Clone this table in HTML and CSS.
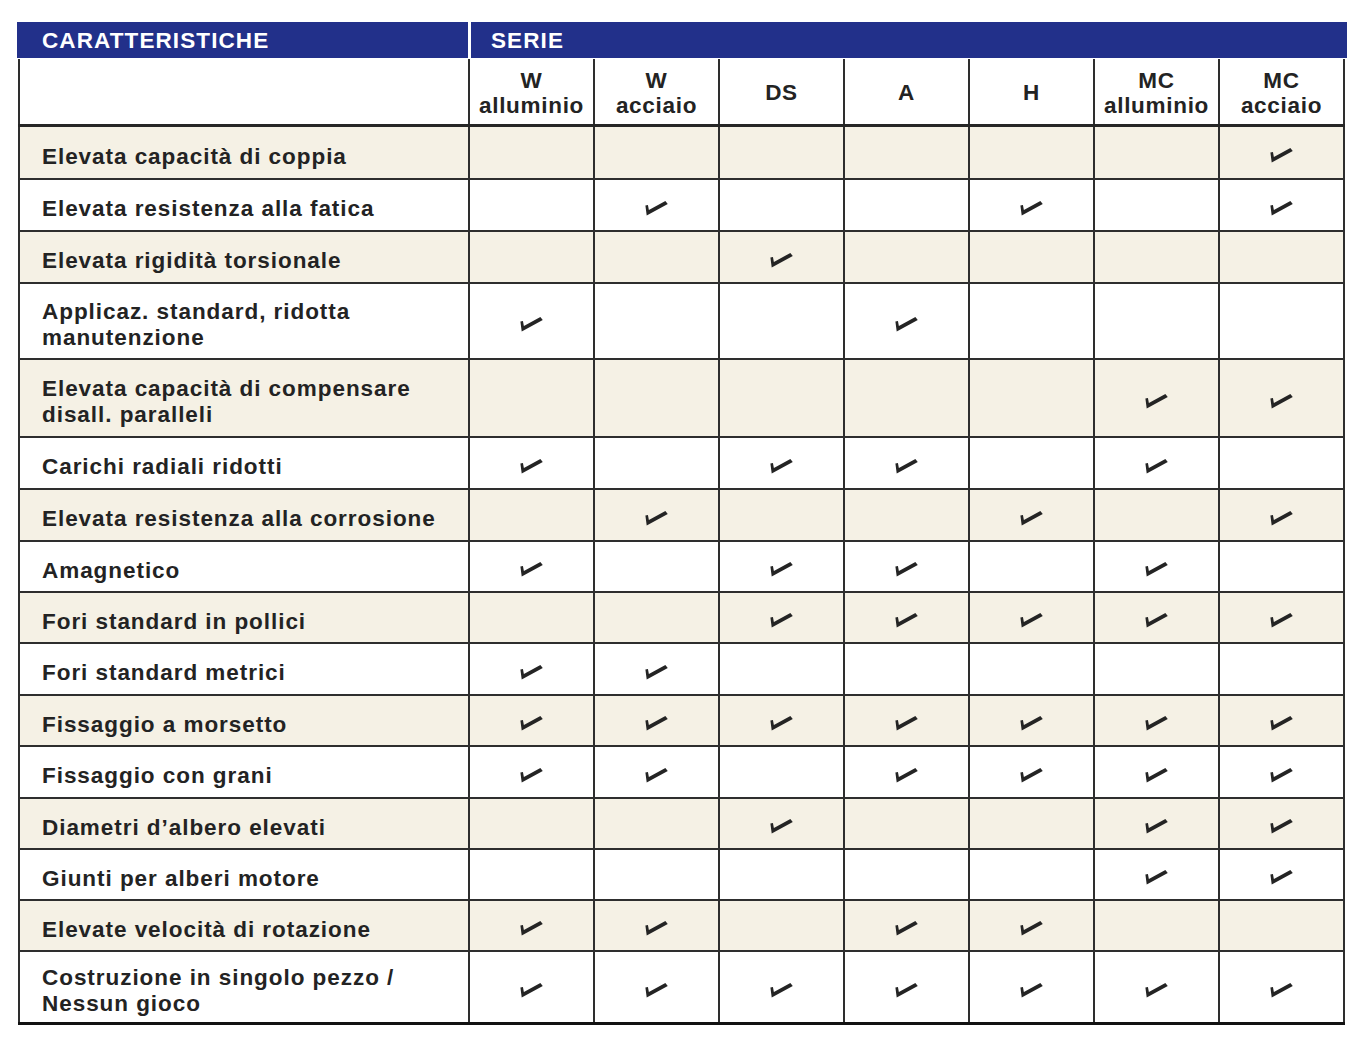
FILE: index.html
```html
<!DOCTYPE html>
<html lang="it">
<head>
<meta charset="utf-8">
<title>Caratteristiche serie</title>
<link rel="stylesheet" href="styles.css">
</head>
<body>
<svg class="defs" width="0" height="0" aria-hidden="true">
  <symbol id="chk" viewBox="0 0 26 17">
    <path d="M1.2 5.8 L3.9 5.2 L4.9 10.6 L22.4 1 L25 4.3 L2.6 16.4 Z"/>
  </symbol>
</svg>
<div class="page">
  <div class="topbar">
    <div class="bar-cell">CARATTERISTICHE</div>
    <div class="bar-cell serie">SERIE</div>
  </div>
  <div class="table">
    <div class="row head">
      <div class="cell first"></div>
      <div class="cell hc">W<br>alluminio</div>
      <div class="cell hc">W<br>acciaio</div>
      <div class="cell hc">DS</div>
      <div class="cell hc">A</div>
      <div class="cell hc">H</div>
      <div class="cell hc">MC<br>alluminio</div>
      <div class="cell hc">MC<br>acciaio</div>
    </div>
    <div class="row shade">
      <div class="cell first">Elevata capacità di coppia</div>
      <div class="cell"></div><div class="cell"></div><div class="cell"></div><div class="cell"></div><div class="cell"></div><div class="cell"></div>
      <div class="cell"><svg class="ck"><use href="#chk"/></svg></div>
    </div>
    <div class="row">
      <div class="cell first">Elevata resistenza alla fatica</div>
      <div class="cell"></div>
      <div class="cell"><svg class="ck"><use href="#chk"/></svg></div>
      <div class="cell"></div><div class="cell"></div>
      <div class="cell"><svg class="ck"><use href="#chk"/></svg></div>
      <div class="cell"></div>
      <div class="cell"><svg class="ck"><use href="#chk"/></svg></div>
    </div>
    <div class="row shade">
      <div class="cell first">Elevata rigidità torsionale</div>
      <div class="cell"></div><div class="cell"></div>
      <div class="cell"><svg class="ck"><use href="#chk"/></svg></div>
      <div class="cell"></div><div class="cell"></div><div class="cell"></div><div class="cell"></div>
    </div>
    <div class="row">
      <div class="cell first">Applicaz. standard, ridotta<br>manutenzione</div>
      <div class="cell"><svg class="ck"><use href="#chk"/></svg></div>
      <div class="cell"></div><div class="cell"></div>
      <div class="cell"><svg class="ck"><use href="#chk"/></svg></div>
      <div class="cell"></div><div class="cell"></div><div class="cell"></div>
    </div>
    <div class="row shade">
      <div class="cell first">Elevata capacità di compensare<br>disall. paralleli</div>
      <div class="cell"></div><div class="cell"></div><div class="cell"></div><div class="cell"></div><div class="cell"></div>
      <div class="cell"><svg class="ck"><use href="#chk"/></svg></div>
      <div class="cell"><svg class="ck"><use href="#chk"/></svg></div>
    </div>
    <div class="row">
      <div class="cell first">Carichi radiali ridotti</div>
      <div class="cell"><svg class="ck"><use href="#chk"/></svg></div>
      <div class="cell"></div>
      <div class="cell"><svg class="ck"><use href="#chk"/></svg></div>
      <div class="cell"><svg class="ck"><use href="#chk"/></svg></div>
      <div class="cell"></div>
      <div class="cell"><svg class="ck"><use href="#chk"/></svg></div>
      <div class="cell"></div>
    </div>
    <div class="row shade">
      <div class="cell first">Elevata resistenza alla corrosione</div>
      <div class="cell"></div>
      <div class="cell"><svg class="ck"><use href="#chk"/></svg></div>
      <div class="cell"></div><div class="cell"></div>
      <div class="cell"><svg class="ck"><use href="#chk"/></svg></div>
      <div class="cell"></div>
      <div class="cell"><svg class="ck"><use href="#chk"/></svg></div>
    </div>
    <div class="row">
      <div class="cell first">Amagnetico</div>
      <div class="cell"><svg class="ck"><use href="#chk"/></svg></div>
      <div class="cell"></div>
      <div class="cell"><svg class="ck"><use href="#chk"/></svg></div>
      <div class="cell"><svg class="ck"><use href="#chk"/></svg></div>
      <div class="cell"></div>
      <div class="cell"><svg class="ck"><use href="#chk"/></svg></div>
      <div class="cell"></div>
    </div>
    <div class="row shade">
      <div class="cell first">Fori standard in pollici</div>
      <div class="cell"></div><div class="cell"></div>
      <div class="cell"><svg class="ck"><use href="#chk"/></svg></div>
      <div class="cell"><svg class="ck"><use href="#chk"/></svg></div>
      <div class="cell"><svg class="ck"><use href="#chk"/></svg></div>
      <div class="cell"><svg class="ck"><use href="#chk"/></svg></div>
      <div class="cell"><svg class="ck"><use href="#chk"/></svg></div>
    </div>
    <div class="row">
      <div class="cell first">Fori standard metrici</div>
      <div class="cell"><svg class="ck"><use href="#chk"/></svg></div>
      <div class="cell"><svg class="ck"><use href="#chk"/></svg></div>
      <div class="cell"></div><div class="cell"></div><div class="cell"></div><div class="cell"></div><div class="cell"></div>
    </div>
    <div class="row shade">
      <div class="cell first">Fissaggio a morsetto</div>
      <div class="cell"><svg class="ck"><use href="#chk"/></svg></div>
      <div class="cell"><svg class="ck"><use href="#chk"/></svg></div>
      <div class="cell"><svg class="ck"><use href="#chk"/></svg></div>
      <div class="cell"><svg class="ck"><use href="#chk"/></svg></div>
      <div class="cell"><svg class="ck"><use href="#chk"/></svg></div>
      <div class="cell"><svg class="ck"><use href="#chk"/></svg></div>
      <div class="cell"><svg class="ck"><use href="#chk"/></svg></div>
    </div>
    <div class="row">
      <div class="cell first">Fissaggio con grani</div>
      <div class="cell"><svg class="ck"><use href="#chk"/></svg></div>
      <div class="cell"><svg class="ck"><use href="#chk"/></svg></div>
      <div class="cell"></div>
      <div class="cell"><svg class="ck"><use href="#chk"/></svg></div>
      <div class="cell"><svg class="ck"><use href="#chk"/></svg></div>
      <div class="cell"><svg class="ck"><use href="#chk"/></svg></div>
      <div class="cell"><svg class="ck"><use href="#chk"/></svg></div>
    </div>
    <div class="row shade">
      <div class="cell first">Diametri d’albero elevati</div>
      <div class="cell"></div><div class="cell"></div>
      <div class="cell"><svg class="ck"><use href="#chk"/></svg></div>
      <div class="cell"></div><div class="cell"></div>
      <div class="cell"><svg class="ck"><use href="#chk"/></svg></div>
      <div class="cell"><svg class="ck"><use href="#chk"/></svg></div>
    </div>
    <div class="row">
      <div class="cell first">Giunti per alberi motore</div>
      <div class="cell"></div><div class="cell"></div><div class="cell"></div><div class="cell"></div><div class="cell"></div>
      <div class="cell"><svg class="ck"><use href="#chk"/></svg></div>
      <div class="cell"><svg class="ck"><use href="#chk"/></svg></div>
    </div>
    <div class="row shade">
      <div class="cell first">Elevate velocità di rotazione</div>
      <div class="cell"><svg class="ck"><use href="#chk"/></svg></div>
      <div class="cell"><svg class="ck"><use href="#chk"/></svg></div>
      <div class="cell"></div>
      <div class="cell"><svg class="ck"><use href="#chk"/></svg></div>
      <div class="cell"><svg class="ck"><use href="#chk"/></svg></div>
      <div class="cell"></div><div class="cell"></div>
    </div>
    <div class="row last">
      <div class="cell first">Costruzione in singolo pezzo /<br>Nessun gioco</div>
      <div class="cell"><svg class="ck"><use href="#chk"/></svg></div>
      <div class="cell"><svg class="ck"><use href="#chk"/></svg></div>
      <div class="cell"><svg class="ck"><use href="#chk"/></svg></div>
      <div class="cell"><svg class="ck"><use href="#chk"/></svg></div>
      <div class="cell"><svg class="ck"><use href="#chk"/></svg></div>
      <div class="cell"><svg class="ck"><use href="#chk"/></svg></div>
      <div class="cell"><svg class="ck"><use href="#chk"/></svg></div>
    </div>
  </div>
</div>
</body>
</html>
```

FILE: styles.css
```css
html, body {
  margin: 0;
  padding: 0;
  background: #ffffff;
}

body {
  font-family: "Liberation Sans", Arial, Helvetica, sans-serif;
  font-weight: bold;
  font-size: 22.5px;
  letter-spacing: 0.95px;
  color: #232323;
}

.defs {
  position: absolute;
  width: 0;
  height: 0;
  overflow: hidden;
}

.page {
  padding: 22px 0 0 17px;
  width: 1330px;
}

.topbar {
  display: grid;
  grid-template-columns: 451px 1fr;
  column-gap: 3px;
  height: 36px;
  margin-bottom: 1px;
}

.bar-cell {
  background: #22308a;
  color: #ffffff;
  display: flex;
  align-items: center;
  padding-left: 25px;
  padding-top: 2px;
  letter-spacing: 1.1px;
}

.bar-cell.serie {
  padding-left: 20px;
}

.table {
  margin-left: 1px;
  width: 1327px;
  display: grid;
  grid-template-rows: 68px 53px 52px 52px 76px 78px 52px 52px 51px 51px 52px 51px 52px 51px 51px 51px 73px;
}

.row {
  display: grid;
  grid-template-columns: 452px repeat(7, 125px);
  border-bottom: 2px solid #2e2e2e;
  box-sizing: border-box;
}

.row.head {
  border-bottom: 3px solid #262626;
}

.row.last {
  border-bottom: 3px solid #111111;
}

.row.shade {
  background: #f5f1e5;
}

.cell {
  border-right: 2px solid #2e2e2e;
  display: flex;
  align-items: center;
  justify-content: center;
  box-sizing: border-box;
}

.cell.first {
  border-left: 2px solid #2e2e2e;
  justify-content: flex-start;
  padding-left: 22px;
  padding-top: 8px;
  line-height: 26px;
}

.row.head .cell.first {
  padding: 0;
}

.hc {
  text-align: center;
  line-height: 25px;
  letter-spacing: 0.7px;
  padding-top: 2px;
}

.ck {
  width: 25px;
  height: 16px;
  fill: #242424;
  margin-top: 5px;
}
```
